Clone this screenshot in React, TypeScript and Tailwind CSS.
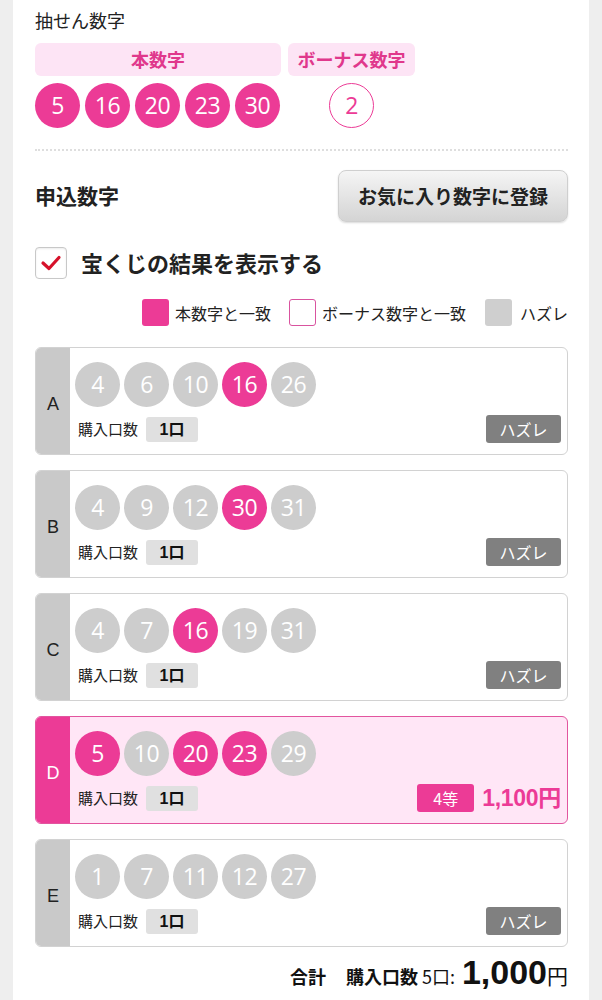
import React from "react";

type Ball = { n: number; hit: boolean };
type Row = { label: string; balls: Ball[]; win?: { rank: string; amount: string } };

const rows: Row[] = [
  { label: "A", balls: [{ n: 4, hit: false }, { n: 6, hit: false }, { n: 10, hit: false }, { n: 16, hit: true }, { n: 26, hit: false }] },
  { label: "B", balls: [{ n: 4, hit: false }, { n: 9, hit: false }, { n: 12, hit: false }, { n: 30, hit: true }, { n: 31, hit: false }] },
  { label: "C", balls: [{ n: 4, hit: false }, { n: 7, hit: false }, { n: 16, hit: true }, { n: 19, hit: false }, { n: 31, hit: false }] },
  {
    label: "D",
    balls: [{ n: 5, hit: true }, { n: 10, hit: false }, { n: 20, hit: true }, { n: 23, hit: true }, { n: 29, hit: false }],
    win: { rank: "4等", amount: "1,100円" },
  },
  { label: "E", balls: [{ n: 1, hit: false }, { n: 7, hit: false }, { n: 11, hit: false }, { n: 12, hit: false }, { n: 27, hit: false }] },
];

const numFont = { fontFamily: '"Open Sans", "Noto Sans", sans-serif' };

function NumBall({ n, kind }: { n: number; kind: "hit" | "miss" | "bonus" }) {
  const cls =
    kind === "hit"
      ? "bg-[#ec3b96] text-white"
      : kind === "miss"
      ? "bg-[#cdcdcd] text-white"
      : "bg-white border-[1.5px] border-[#ec3b96] text-[#ec3b96]";
  return (
    <div
      className={`w-[45px] h-[45px] rounded-full flex items-center justify-center text-[23px] leading-none tracking-[-0.5px] ${cls}`}
      style={numFont}
    >
      {n}
    </div>
  );
}

function Card({ row }: { row: Row }) {
  const win = !!row.win;
  return (
    <div
      className={`flex h-[108px] rounded-[6px] border overflow-hidden ${
        win ? "border-[#e2559f] bg-[#ffe6f6]" : "border-[#d2d2d2] bg-white"
      }`}
    >
      <div
        className={`w-[34px] shrink-0 flex items-center justify-center text-[18px] pt-[6px] ${
          win ? "bg-[#ec3b96] text-white" : "bg-[#c9c9c9] text-[#222]"
        }`}
        style={{ fontFamily: '"Liberation Sans", Arial, sans-serif' }}
      >
        {row.label}
      </div>
      <div className="flex-1 pl-[5px] pr-[6px] pt-[14px]">
        <div className="flex gap-[4px]">
          {row.balls.map((b, i) => (
            <NumBall key={i} n={b.n} kind={b.hit ? "hit" : "miss"} />
          ))}
        </div>
        <div className="mt-[8px] h-[28px] flex items-center justify-between">
          <div className="flex items-center">
            <span className="text-[15px] text-[#222] ml-[3px]">購入口数</span>
            <span
              className="ml-[8px] w-[52px] h-[25px] mt-[1px] rounded-[3px] bg-[#e0e0e0] flex items-center justify-center text-[16px] font-bold text-[#111]"
              style={{ fontFamily: '"Liberation Sans", "Noto Sans CJK JP", sans-serif' }}
            >
              1口
            </span>
          </div>
          {row.win ? (
            <div className="flex items-center">
              <span className="w-[57px] h-[28px] rounded-[3px] bg-[#ec3b96] text-white text-[16px] flex items-center justify-center">
                {row.win.rank}
              </span>
              <span
                className="ml-[8px] text-[23px] font-bold text-[#ec3b96] tracking-[-0.3px]"
                style={{ fontFamily: '"Liberation Sans", "Noto Sans CJK JP", sans-serif' }}
              >
                {row.win.amount}
              </span>
            </div>
          ) : (
            <span className="w-[75px] h-[28px] rounded-[3px] bg-[#808080] text-white text-[16px] flex items-center justify-center">
              ハズレ
            </span>
          )}
        </div>
      </div>
    </div>
  );
}

export default function App() {
  return (
    <div
      className="min-h-screen bg-[#eeeeee] px-[13px]"
      style={{ fontFamily: '"Noto Sans CJK JP", "Noto Sans", sans-serif' }}
    >
      <div className="bg-white pl-[22px] pr-[21px] pt-[8px] pb-[10px] min-h-[1000px]">
        <div className="text-[18px] leading-[24px] text-[#222]">抽せん数字</div>

        <div className="mt-[11px] flex gap-[7px]">
          <div className="w-[246px] h-[33px] rounded-[6px] bg-[#fde4f5] flex items-center justify-center text-[18px] font-bold text-[#e0388c]">
            本数字
          </div>
          <div className="w-[127px] h-[33px] rounded-[6px] bg-[#fde4f5] flex items-center justify-center text-[18px] font-bold text-[#e0388c]">
            ボーナス数字
          </div>
        </div>

        <div className="mt-[7px] flex gap-[7px]">
          <div className="w-[246px] flex gap-[5px]">
            {[5, 16, 20, 23, 30].map((n) => (
              <NumBall key={n} n={n} kind="hit" />
            ))}
          </div>
          <div className="w-[127px] flex justify-center">
            <NumBall n={2} kind="bonus" />
          </div>
        </div>

        <div className="mt-[21px] border-t-[2px] border-dotted border-[#dedede]" />

        <div className="mt-[19px] flex items-center justify-between">
          <div className="text-[21px] font-bold text-[#222]">申込数字</div>
          <button className="w-[230px] h-[52px] rounded-[8px] border border-[#cfcfcf] bg-gradient-to-b from-[#f5f5f5] to-[#d4d4d4] shadow-[0_1px_2px_rgba(0,0,0,0.15)] text-[19px] font-bold text-[#222]">
            お気に入り数字に登録
          </button>
        </div>

        <div className="mt-[24px] flex items-center">
          <div className="w-[32px] h-[32px] rounded-[4px] border border-[#c8c8c8] bg-white flex items-center justify-center shadow-[inset_0_1px_2px_rgba(0,0,0,0.08)]">
            <svg width="24" height="24" viewBox="0 0 24 24">
              <path d="M4 12 L10 17.5 L20 6.5" fill="none" stroke="#d6112a" strokeWidth="3.2" strokeLinecap="round" strokeLinejoin="round" />
            </svg>
          </div>
          <div className="ml-[14px] text-[22px] font-bold text-[#222]">宝くじの結果を表示する</div>
        </div>

        <div className="mt-[20px] flex items-center justify-end text-[16px] text-[#222]">
          <div className="w-[27px] h-[27px] rounded-[3px] bg-[#ec3b96]" />
          <span className="ml-[6px]">本数字と一致</span>
          <div className="ml-[18px] w-[27px] h-[27px] rounded-[3px] border-[1.5px] border-[#d9539f] bg-white" />
          <span className="ml-[6px]">ボーナス数字と一致</span>
          <div className="ml-[19px] w-[27px] h-[27px] rounded-[3px] bg-[#cfcfcf]" />
          <span className="ml-[8px]">ハズレ</span>
        </div>

        <div className="mt-[21px] flex flex-col gap-[15px]">
          {rows.map((r) => (
            <Card key={r.label} row={r} />
          ))}
        </div>

        <div className="mt-[4px] flex items-baseline justify-end text-[#111]">
          <span className="text-[18px] font-bold">合計</span>
          <span className="ml-[20px] text-[18px] font-bold">購入口数</span>
          <span className="ml-[4px] text-[18px]">5口:</span>
          <span
            className="ml-[7px] text-[34px] font-bold leading-[42px]"
            style={{ fontFamily: '"Liberation Sans", Arial, sans-serif' }}
          >
            1,000
          </span>
          <span className="text-[21px]">円</span>
        </div>
      </div>
    </div>
  );
}
